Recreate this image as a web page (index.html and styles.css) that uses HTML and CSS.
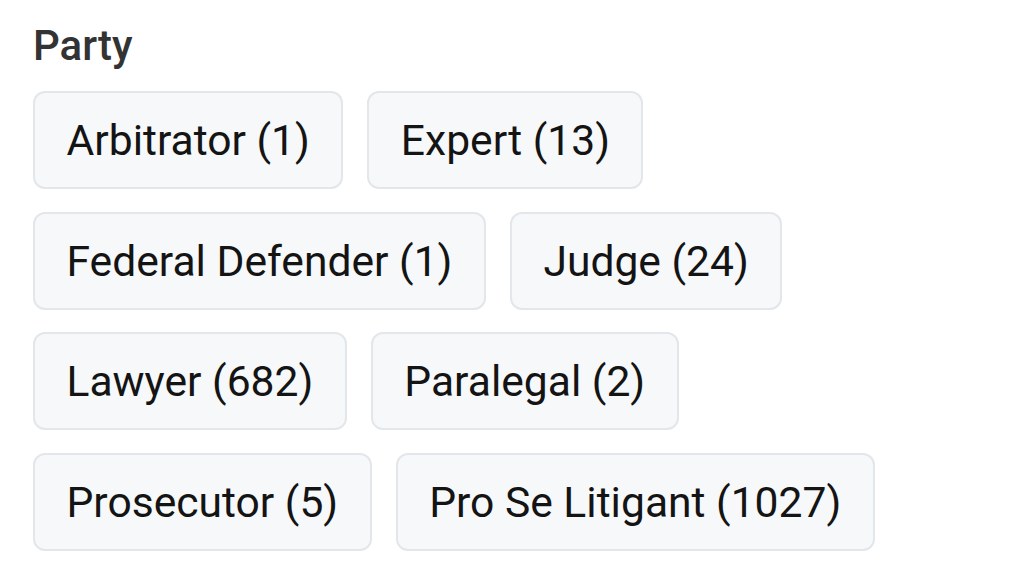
FILE: index.html
```html
<!DOCTYPE html>
<html lang="en">
<head>
    <meta charset="UTF-8">
    <meta name="viewport" content="width=device-width, initial-scale=1.0">
    <title>Filter by Party</title>
    <link rel="stylesheet" href="styles.css">
</head>
<body>
    <div class="filter-group">
        <div class="filter-title">Party</div>
        <div class="chips">
            <button class="chip">Arbitrator (1)</button>
            <button class="chip">Expert (13)</button>
            <button class="chip">Federal Defender (1)</button>
            <button class="chip">Judge (24)</button>
            <button class="chip">Lawyer (682)</button>
            <button class="chip">Paralegal (2)</button>
            <button class="chip">Prosecutor (5)</button>
            <button class="chip">Pro Se Litigant (1027)</button>
        </div>
    </div>
</body>
</html>
```

FILE: styles.css
```css
* {
    margin: 0;
    padding: 0;
    box-sizing: border-box;
}

body, html {
    width: 100%;
    height: 100%;
    background: #ffffff;
    font-family: Roboto, 'Noto Sans', sans-serif;
}

.filter-group {
    padding: 21px 33px 0 33px;
}

.filter-title {
    font-size: 42px;
    font-weight: 500;
    color: #333333;
    margin-bottom: 21px;
}

.chips {
    display: flex;
    flex-wrap: wrap;
    column-gap: 24px;
    row-gap: 22.5px;
}

.chip {
    display: flex;
    align-items: center;
    height: 98px;
    padding: 0 31.5px;
    background: #f7f8fa;
    border: 2px solid #e3e6ea;
    border-radius: 12px;
    font-family: inherit;
    font-size: 42.6px;
    color: #141414;
    cursor: pointer;
}
```
